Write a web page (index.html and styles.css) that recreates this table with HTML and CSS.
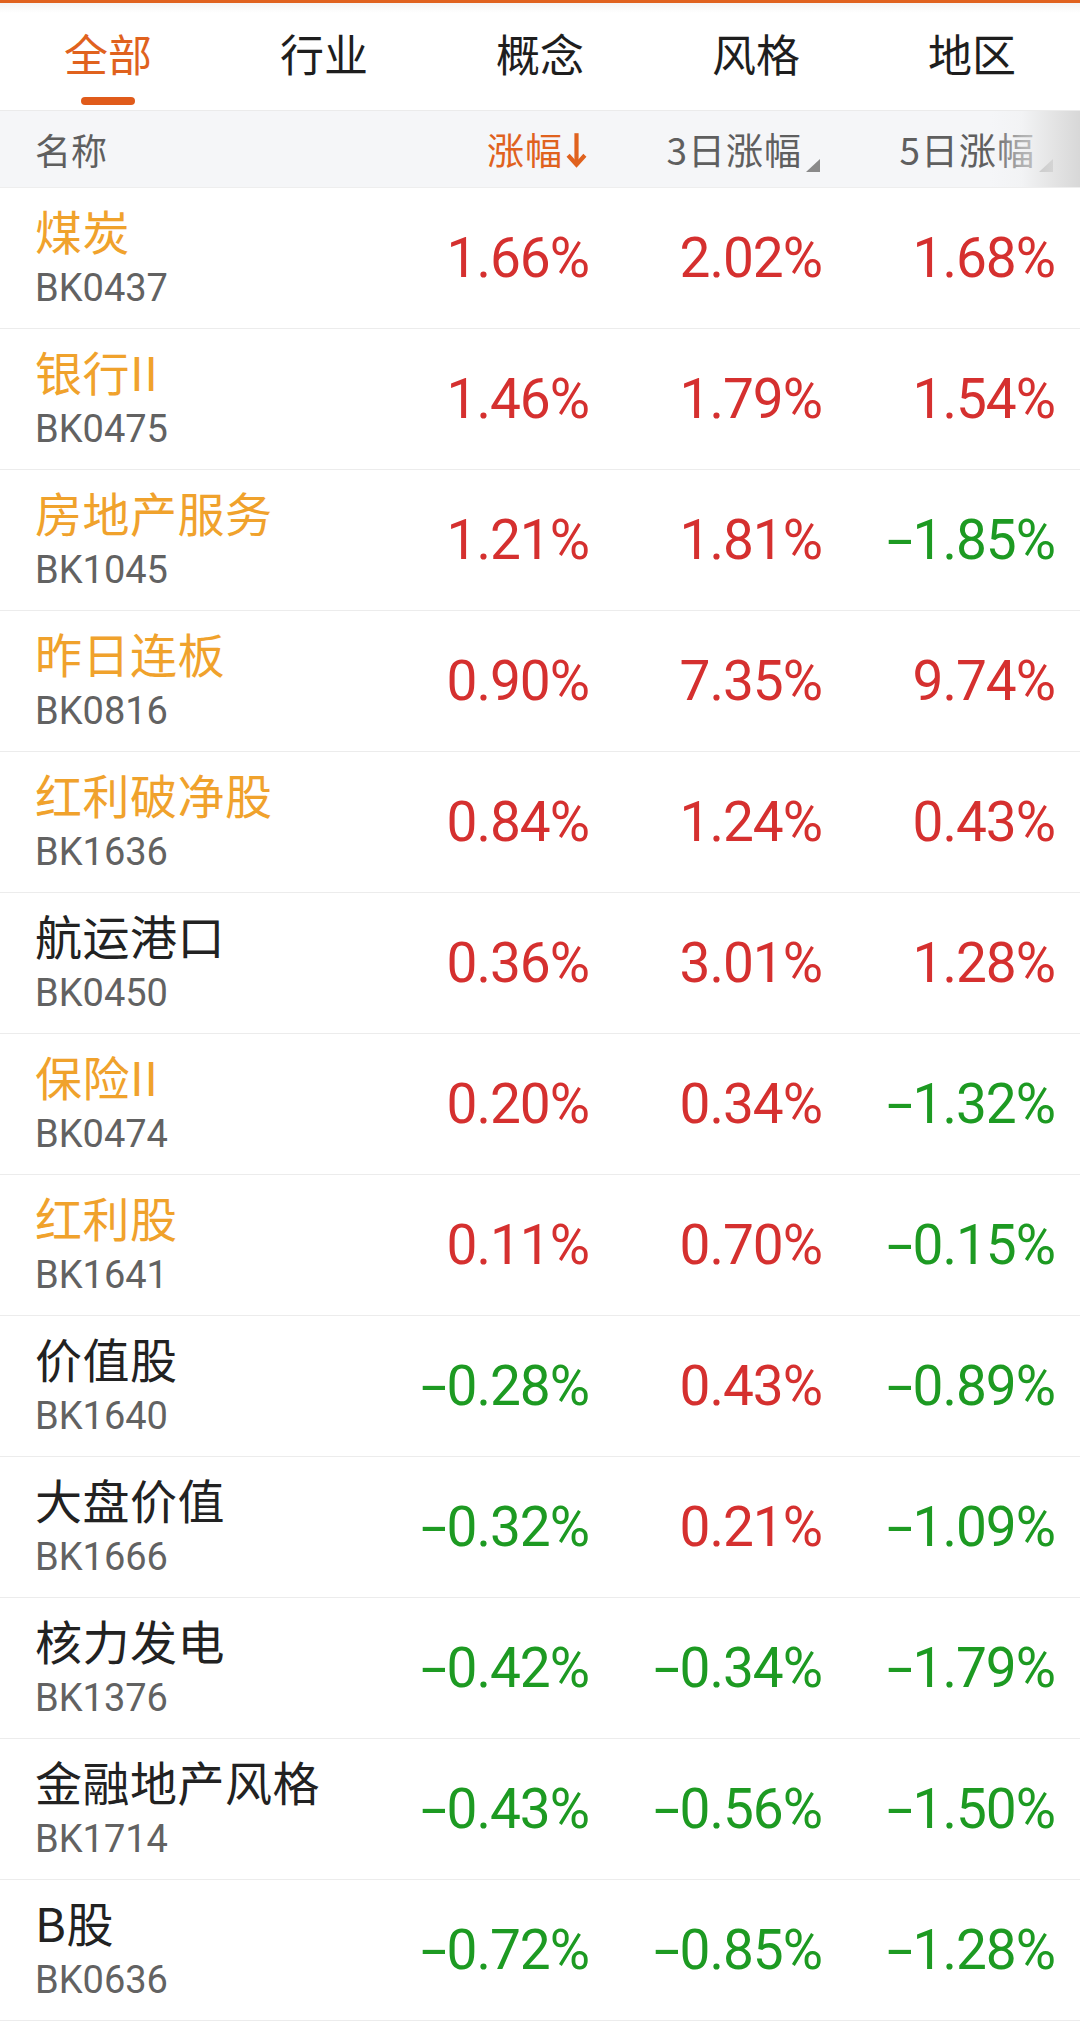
FILE: index.html
```html
<!DOCTYPE html>
<html lang="zh-CN">
<head>
<meta charset="utf-8">
<title>板块涨幅</title>
<link rel="stylesheet" href="styles.css">
</head>
<body>
<div class="page">
  <nav class="tabs">
    <div class="tab active"><span class="tab-label">全部</span><span class="tab-bar"></span></div>
    <div class="tab"><span class="tab-label">行业</span></div>
    <div class="tab"><span class="tab-label">概念</span></div>
    <div class="tab"><span class="tab-label">风格</span></div>
    <div class="tab"><span class="tab-label">地区</span></div>
  </nav>

  <div class="thead">
    <div class="th th-name">名称</div>
    <div class="th th-num sorted">涨幅<svg class="arrow" width="20" height="36" viewBox="0 0 20 36"><path d="M10 2 V32" stroke="#e0621e" stroke-width="4" fill="none"/><path d="M2 23 L10 32 L18 23" stroke="#e0621e" stroke-width="4" fill="none" stroke-linejoin="miter"/></svg></div>
    <div class="th th-num">3日涨幅<svg class="tri" width="14" height="13" viewBox="0 0 14 13"><polygon points="14,0 14,13 0,13" fill="#8a8a8a"/></svg></div>
    <div class="th th-num">5日涨幅<svg class="tri" width="14" height="13" viewBox="0 0 14 13"><polygon points="14,0 14,13 0,13" fill="#8a8a8a"/></svg></div>
    <div class="fade"></div>
  </div>

  <div class="tbody">
    <div class="row"><div class="name"><div class="title gold">煤炭</div><div class="code">BK0437</div></div><div class="num up">1.66%</div><div class="num up">2.02%</div><div class="num up">1.68%</div></div>
    <div class="row"><div class="name"><div class="title gold">银行II</div><div class="code">BK0475</div></div><div class="num up">1.46%</div><div class="num up">1.79%</div><div class="num up">1.54%</div></div>
    <div class="row"><div class="name"><div class="title gold">房地产服务</div><div class="code">BK1045</div></div><div class="num up">1.21%</div><div class="num up">1.81%</div><div class="num down"><span class="sign">-</span>1.85%</div></div>
    <div class="row"><div class="name"><div class="title gold">昨日连板</div><div class="code">BK0816</div></div><div class="num up">0.90%</div><div class="num up">7.35%</div><div class="num up">9.74%</div></div>
    <div class="row"><div class="name"><div class="title gold">红利破净股</div><div class="code">BK1636</div></div><div class="num up">0.84%</div><div class="num up">1.24%</div><div class="num up">0.43%</div></div>
    <div class="row"><div class="name"><div class="title">航运港口</div><div class="code">BK0450</div></div><div class="num up">0.36%</div><div class="num up">3.01%</div><div class="num up">1.28%</div></div>
    <div class="row"><div class="name"><div class="title gold">保险II</div><div class="code">BK0474</div></div><div class="num up">0.20%</div><div class="num up">0.34%</div><div class="num down"><span class="sign">-</span>1.32%</div></div>
    <div class="row"><div class="name"><div class="title gold">红利股</div><div class="code">BK1641</div></div><div class="num up">0.11%</div><div class="num up">0.70%</div><div class="num down"><span class="sign">-</span>0.15%</div></div>
    <div class="row"><div class="name"><div class="title">价值股</div><div class="code">BK1640</div></div><div class="num down"><span class="sign">-</span>0.28%</div><div class="num up">0.43%</div><div class="num down"><span class="sign">-</span>0.89%</div></div>
    <div class="row"><div class="name"><div class="title">大盘价值</div><div class="code">BK1666</div></div><div class="num down"><span class="sign">-</span>0.32%</div><div class="num up">0.21%</div><div class="num down"><span class="sign">-</span>1.09%</div></div>
    <div class="row"><div class="name"><div class="title">核力发电</div><div class="code">BK1376</div></div><div class="num down"><span class="sign">-</span>0.42%</div><div class="num down"><span class="sign">-</span>0.34%</div><div class="num down"><span class="sign">-</span>1.79%</div></div>
    <div class="row"><div class="name"><div class="title">金融地产风格</div><div class="code">BK1714</div></div><div class="num down"><span class="sign">-</span>0.43%</div><div class="num down"><span class="sign">-</span>0.56%</div><div class="num down"><span class="sign">-</span>1.50%</div></div>
    <div class="row"><div class="name"><div class="title">B股</div><div class="code">BK0636</div></div><div class="num down"><span class="sign">-</span>0.72%</div><div class="num down"><span class="sign">-</span>0.85%</div><div class="num down"><span class="sign">-</span>1.28%</div></div>
  </div>
</div>
</body>
</html>
```

FILE: styles.css
```css
* { box-sizing: border-box; margin: 0; padding: 0; }

html, body {
  background: #ffffff;
}

body {
  margin: 0;
  font-family: "Noto Sans CJK SC", "Noto Sans", sans-serif;
  color: #222222;
}

.page {
  width: 1080px;
}

/* ---------- tabs ---------- */
.tabs {
  display: grid;
  grid-template-columns: repeat(5, 1fr);
  height: 111px;
  border-top: 3px solid #e0621e;
  border-bottom: 1px solid #ebebeb;
  background: linear-gradient(to bottom, #f4f4f4 0, #ffffff 10px);
}

.tab {
  display: flex;
  flex-direction: column;
  align-items: center;
  padding-top: 20px;
}

.tab-label {
  font-size: 44px;
  line-height: 60px;
  color: #1e1e1e;
  font-family: "Noto Sans CJK SC", sans-serif;
}

.tab.active .tab-label {
  color: #e0621e;
}

.tab-bar {
  display: block;
  width: 54px;
  height: 8px;
  margin-top: 14px;
  border-radius: 4px;
  background: #e05b1b;
}

/* ---------- table head ---------- */
.thead {
  position: relative;
  display: grid;
  grid-template-columns: 1fr 233px 233px 233px;
  align-items: center;
  height: 77px;
  padding: 0 27px 0 35px;
  background: #f5f6f8;
  border-bottom: 1px solid #eeeeee;
}

.th {
  font-size: 37px;
  line-height: 48px;
  color: #5f5f5f;
  font-family: "Noto Sans CJK SC", sans-serif;
}

.th-name {
  font-size: 36px;
}

.th-num {
  display: flex;
  justify-content: flex-end;
  align-items: center;
  letter-spacing: 1px;
}

.th-num .tri {
  align-self: flex-end;
  margin-left: 4px;
  margin-bottom: 1px;
}

.th.sorted {
  color: #e0621e;
}

.th .arrow {
  margin-left: 3px;
  margin-top: 2px;
  width: 21px;
  height: 38px;
}

.fade {
  position: absolute;
  top: 0;
  right: 0;
  bottom: 0;
  width: 90px;
  background: linear-gradient(to right,
    rgba(245, 246, 248, 0) 0%,
    rgba(240, 241, 242, 0.55) 35%,
    rgba(225, 225, 225, 0.85) 70%,
    rgba(214, 214, 214, 0.95) 100%);
}

/* ---------- rows ---------- */
.row {
  display: grid;
  grid-template-columns: 1fr 233px 233px 233px;
  align-items: center;
  height: 141px;
  padding: 0 25px 0 35px;
  border-bottom: 1px solid #ececec;
}

.name {
  align-self: start;
  padding-top: 13px;
}

.title {
  font-size: 47px;
  line-height: 58px;
  letter-spacing: 0.5px;
  color: #222222;
  white-space: nowrap;
  font-family: "Noto Sans CJK SC", sans-serif;
}

.title.gold {
  color: #f0a22c;
}

.code {
  margin-top: 7px;
  font-family: Roboto, "Noto Sans", sans-serif;
  font-size: 38px;
  line-height: 44px;
  color: #626262;
}

.num {
  text-align: right;
  font-family: Roboto, "Noto Sans", sans-serif;
  font-size: 55px;
  line-height: 60px;
  letter-spacing: -1px;
  white-space: nowrap;
}

.num .sign {
  display: inline-block;
  transform: scaleX(1.7);
  margin: 0 6px 0 8px;
}

.num.up {
  color: #d5302f;
}

.num.down {
  color: #1d9a22;
}
```
